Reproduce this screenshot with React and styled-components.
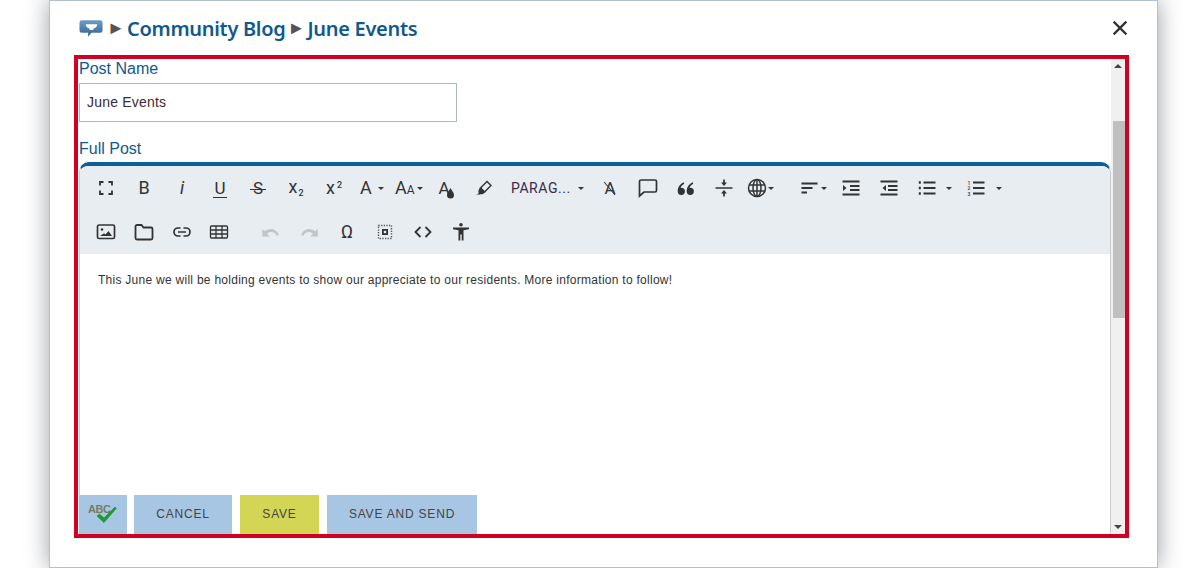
import React from 'react';
import styled, { createGlobalStyle } from 'styled-components';

const Global = createGlobalStyle`
  html, body { margin: 0; padding: 0; background: #fff; overflow: hidden; }
  body { font-family: "Liberation Sans", Arial, sans-serif; }
`;
const Page = styled.div`height: 568px; padding-left: 49px;`;
const Modal = styled.div`
  box-sizing: border-box; width: 1109px; height: 568px; background: #fff;
  border: 1px solid #b2c1cf; box-shadow: 0 0 22px rgba(30,40,50,.45);
  display: flex; flex-direction: column;
`;
const Header = styled.header`
  height: 54px; flex: none; display: flex; align-items: center; padding: 0 28px 0 29px;
`;
const Crumb = styled.h1`
  margin: 0; display: flex; align-items: center; flex: 1; gap: 5px;
  font: 600 20px "Noto Sans", "Open Sans", sans-serif; color: #11598c; letter-spacing: -.3px;
`;
const Sep = styled.span`
  font: 400 18px/1 "Liberation Sans", sans-serif; color: #555; width: 12px; display: flex;
  justify-content: center; letter-spacing: 0;
`;
const Close = styled.button`
  border: 0; background: none; padding: 0; margin-right: -1px; width: 20px; height: 20px;
  display: flex; align-items: center; justify-content: center;
`;
const Panel = styled.section`
  box-sizing: border-box; height: 483px; margin: 0 28px 0 24px; border: 4px solid #cf0022;
  display: flex; overflow: hidden;
`;
const Main = styled.div`flex: 1; min-width: 0; padding-left: 1px; display: flex; flex-direction: column;`;
const Label = styled.label`
  display: block; font-size: 16px; line-height: 19px; color: #11598c;
  margin-bottom: ${p => p.$gap}px;
`;
const NameInput = styled.div`
  box-sizing: border-box; width: 378px; height: 39px; border: 1px solid #a9b8c6;
  display: flex; align-items: center; padding: 0 0 2px 7px; font-size: 14px; color: #3b2a3a;
  margin-bottom: 17px; letter-spacing: .2px;
`;
const Editor = styled.div`
  flex: 1; min-height: 0; border-top: 4px solid #0f5e9a; border-radius: 10px 10px 0 0;
  display: flex; flex-direction: column; border-left: 1px solid #ccc; border-right: 1px solid #ccc;
`;
const Toolbar = styled.div`background: #e8edf1; height: 88px; padding-left: 7px; border-radius: 8px 8px 0 0; flex: none;`;
const ToolRow = styled.div`display: flex; height: 44px; align-items: center;`;
const Tool = styled.span`
  width: ${p => p.$w || 38}px; height: 44px; flex: none; display: flex; align-items: center;
  justify-content: ${p => p.$start ? 'flex-start' : 'center'};
  padding-left: ${p => p.$pl || 0}px; box-sizing: border-box; color: #333; position: relative;
`;
const ToolGap = styled.span`width: ${p => p.$w}px; flex: none;`;
const Caret = styled.i`
  width: 0; height: 0; flex: none; margin-left: ${p => p.$ml ?? 2}px;
  border-left: 3.5px solid transparent; border-right: 3.5px solid transparent; border-top: 3.5px solid #333;
`;
const Glyph = styled.span`
  font: ${p => p.$style || 'normal'} ${p => p.$w || 400} ${p => p.$s || 18}px/1 Roboto, "Liberation Sans", sans-serif;
  color: #333; position: relative; display: inline-block;
`;
const Under = styled(Glyph)`
  border-bottom: 1.5px solid #333; padding: 0 1px 1px; line-height: 15px; margin-top: 3px;
`;
const Strike = styled(Glyph)`
  &::after { content: ""; position: absolute; left: -3px; right: -3px; top: 9px; height: 1.5px; background: #333; }
`;
const Slash = styled(Glyph)`
  &::after { content: ""; position: absolute; left: -3px; right: -3px; top: 8px; height: 1.2px; background: #333; transform: rotate(50deg); }
`;
const Sub = styled.sub`font: 500 9px Roboto, sans-serif; vertical-align: -3px; margin-left: 1px;`;
const Sup = styled.sup`font: 500 9px Roboto, sans-serif; vertical-align: 6px; margin-left: 2px;`;
const Small = styled.span`font-size: 12px;`;
const ParaText = styled.span`font: 400 14px Roboto, "Liberation Sans", sans-serif; color: #3b2a4a; letter-spacing: .55px;`;
const EditBody = styled.div`flex: 1; padding: 18px 0 0 18px; font-size: 12px; line-height: 16px; color: #333; letter-spacing: .27px;`;
const Footer = styled.div`
  flex: none; height: 39px; display: flex; gap: 8px; border-right: 1px solid #ccc;
`;
const Btn = styled.button`
  border: 0; height: 39px; width: ${p => p.$w}px; background: ${p => p.$bg || '#a7c6e3'}; padding: 0 0 2px;
  font: 400 12px "Liberation Sans", sans-serif; letter-spacing: .8px; color: #444;
`;
const SpellBtn = styled(Btn)`
  margin-right: -1px; position: relative; display: flex; align-items: center; justify-content: center;
`;
const Abc = styled.span`
  position: absolute; left: 9px; top: 8px; font: 700 11px "Liberation Sans", sans-serif;
  color: #757c66; letter-spacing: -.5px;
`;
const Track = styled.div`
  width: 14px; flex: none; background: #f0f0f0; display: flex; flex-direction: column; align-items: flex-end;
`;
const ArrowBox = styled.div`height: 14px; width: 14px; flex: none; display: flex; align-items: center; justify-content: center;`;
const Thumb = styled.div`width: 12px; height: 197px; background: #c0c0c0; margin-top: 48px;`;
const TrackFill = styled.div`flex: 1;`;

const Ic = ({ children, s = 24, fill = 'none', stroke = '#333', sw = 1.6 }) => (
  <svg width={s} height={s} viewBox="0 0 24 24" fill={fill} stroke={stroke} strokeWidth={sw}>{children}</svg>
);

export default function App() {
  return (
    <Page>
      <Global />
      <Modal>
        <Header>
          <Crumb>
            <svg width="25" height="20" viewBox="0 0 26 20" style={{ marginRight: 1 }}>
              <defs>
                <linearGradient id="bub" x1="0" y1="0" x2="0" y2="1">
                  <stop offset="0" stopColor="#6f9cc6" />
                  <stop offset="1" stopColor="#2f6394" />
                </linearGradient>
              </defs>
              <path d="M3 2h19a2.500 2.500 0 0 1 2.500 2.500v8A2.500 2.500 0 0 1 22 15H13l-3.500 4V15H3A2.500 2.500 0 0 1 .5 12.500v-8A2.500 2.500 0 0 1 3 2z" fill="url(#bub)" />
              <path d="M7 6h12c0 2.500-2 4-4 4.500V12h-4v-1.500C9 10 7 8.500 7 6z" fill="#fff" />
            </svg>
            <Sep>►</Sep>
            Community Blog
            <Sep>►</Sep>
            June Events
          </Crumb>
          <Close aria-label="Close">
            <svg width="16" height="16" viewBox="0 0 16 16" stroke="#333" strokeWidth="2.400" strokeLinecap="square">
              <path d="M2.500 2.500l11 11M13.500 2.500l-11 11" />
            </svg>
          </Close>
        </Header>
        <Panel>
          <Main>
            <Label $gap={5}>Post Name</Label>
            <NameInput>June Events</NameInput>
            <Label $gap={4}>Full Post</Label>
            <Editor>
              <Toolbar>
                <ToolRow>
                  <Tool><Ic sw={1.800}><path d="M6 9.500V6h3.500M14.500 6H18v3.500M18 14.500V18h-3.500M9.500 18H6v-3.500" /></Ic></Tool>
                  <Tool><Glyph $s={18}>B</Glyph></Tool>
                  <Tool><Glyph $style="italic" $s={18}>i</Glyph></Tool>
                  <Tool><Under $s={17}>U</Under></Tool>
                  <Tool><Strike $s={17}>S</Strike></Tool>
                  <Tool><Glyph $s={18}>x<Sub>2</Sub></Glyph></Tool>
                  <Tool><Glyph $s={18}>x<Sup>2</Sup></Glyph></Tool>
                  <Tool $w={37} $start $pl={7}><Glyph $s={18}>A</Glyph><Caret $ml={6} /></Tool>
                  <Tool $w={38} $start $pl={5}><Glyph $s={18}>A<Small>A</Small></Glyph><Caret $ml={2} /></Tool>
                  <Tool $w={37}>
                    <Glyph $s={17}>A</Glyph>
                    <svg width="9" height="12" viewBox="0 0 9 12" style={{ marginLeft: -4, marginTop: 9 }}><path d="M4.500 1C6 4 8 5.500 8 8a3.500 3.500 0 0 1-7 0c0-2.500 2-4 3.500-7z" fill="#333" /></svg>
                  </Tool>
                  <Tool>
                    <Ic sw={1.400}>
                      <path d="M15 5.500l4 4-6.500 6.500-4-4z" />
                      <path d="M8.500 12l4 4-2 1.500H7.500L7 15z" fill="#333" />
                      <path d="M4 19l3-2 1 1.500H4z" fill="#333" stroke="none" />
                    </Ic>
                  </Tool>
                  <Tool $w={88} $start $pl={8}><ParaText>PARAG...</ParaText><Caret $ml={7} /></Tool>
                  <Tool><Slash $s={17}>A</Slash></Tool>
                  <Tool><Ic sw={1.7}><path d="M5 4h14a1.500 1.500 0 0 1 1.500 1.500v9A1.500 1.500 0 0 1 19 16H8l-4.500 4V5.500A1.500 1.500 0 0 1 5 4z" /></Ic></Tool>
                  <Tool>
                    <Ic fill="#333" stroke="none">
                      <g transform="translate(-2.300 -2.700) scale(1.200)">
                        <path d="M10 7.500C7 9 5 11.500 5 15a3 3 0 1 0 3-3l-.6.100C7.700 11 8.600 9.800 10.500 8.700z" />
                        <path d="M17.500 7.500C14.500 9 12.500 11.500 12.500 15a3 3 0 1 0 3-3l-.6.100c.3-1.100 1.200-2.300 3.100-3.400z" />
                      </g>
                    </Ic>
                  </Tool>
                  <Tool>
                    <Ic sw={1.7}>
                      <path d="M3.500 12h17M12 3.500v4M12 20.500v-4" />
                      <path d="M9 6.500h6L12 10zM9 17.500h6L12 14z" fill="#333" stroke="none" />
                    </Ic>
                  </Tool>
                  <Tool $w={44} $start $pl={2}>
                    <Ic sw={1.5}>
                      <circle cx="12" cy="12" r="8.500" />
                      <ellipse cx="12" cy="12" rx="4" ry="8.500" />
                      <path d="M12 3.500v17M4 9h16M4 15h16" />
                    </Ic>
                    <Caret $ml={-1} />
                  </Tool>
                  <Tool $w={45} $start $pl={12}>
                    <Ic sw={1.800}><path d="M2.500 7.500h16M2.500 12h11M2.500 16.500h5.500" /></Ic>
                    <Caret $ml={-2} />
                  </Tool>
                  <Tool>
                    <Ic sw={1.800}>
                      <path d="M3.500 5.500h17M11 10h9.500M11 14h9.500M3.500 18.500h17" />
                      <path d="M4 9l3.500 3L4 15z" fill="#333" stroke="none" />
                    </Ic>
                  </Tool>
                  <Tool>
                    <Ic sw={1.800}>
                      <path d="M3.500 5.500h17M11 10h9.500M11 14h9.500M3.500 18.500h17" />
                      <path d="M9 9l-3.500 3L9 15z" fill="#333" stroke="none" />
                    </Ic>
                  </Tool>
                  <Tool $w={50} $start $pl={7}>
                    <Ic sw={2}>
                      <path d="M8.500 6.500h12M8.500 12h12M8.500 17.500h12" />
                      <path d="M3.800 6.500h2M3.800 12h2M3.800 17.500h2" strokeWidth="2.600" />
                    </Ic>
                    <Caret $ml={7} />
                  </Tool>
                  <Tool $w={50} $start $pl={6}>
                    <Ic sw={2}>
                      <path d="M9 6.500h11.500M9 12h11.500M9 17.500h11.500" />
                      <text x="3.500" y="8.500" fontSize="5" fill="#333" stroke="none" fontFamily="Roboto" fontWeight="500">1</text>
                      <text x="3.500" y="14" fontSize="5" fill="#333" stroke="none" fontFamily="Roboto" fontWeight="500">2</text>
                      <text x="3.500" y="19.500" fontSize="5" fill="#333" stroke="none" fontFamily="Roboto" fontWeight="500">3</text>
                    </Ic>
                    <Caret $ml={8} />
                  </Tool>
                </ToolRow>
                <ToolRow>
                  <Tool>
                    <Ic sw={1.7}>
                      <rect x="3.500" y="5" width="17" height="13.500" rx="1.500" />
                      <circle cx="8" cy="9.500" r="1.300" fill="#333" stroke="none" />
                      <path d="M6 16h12l-3.500-5-3 3.500-1.500-1.300z" fill="#333" stroke="none" />
                    </Ic>
                  </Tool>
                  <Tool>
                    <Ic sw={1.8}><path d="M3.500 6.500A1.500 1.500 0 0 1 5 5h4.500l2 2.500H19a1.500 1.500 0 0 1 1.500 1.500v9A1.500 1.500 0 0 1 19 19.500H5A1.500 1.500 0 0 1 3.500 18z" /></Ic>
                  </Tool>
                  <Tool $w={37}>
                    <Ic sw={1.7}><path d="M10.500 8H8a4 4 0 0 0 0 8h2.500M13.500 8H16a4 4 0 0 1 0 8h-2.500M8 12h8" /></Ic>
                  </Tool>
                  <Tool>
                    <Ic sw={1.3}>
                      <rect x="3.500" y="6" width="17" height="12" rx="1" />
                      <path d="M3.500 10h17M3.500 14h17M9 6v12M15 6v12" />
                    </Ic>
                  </Tool>
                  <ToolGap $w={14} />
                  <Tool>
                    <Ic fill="#c2c6ca" stroke="none">
                      <g transform="translate(-3 -3) scale(1.250)">
                        <path d="M12 9.500c-2 0-3.700.7-5 1.900L5 9.500v6h6l-2.200-2.200c1-.9 2-1.300 3.200-1.300 2 0 3.800 1.300 4.500 3l1.800-.6C17.300 11.500 14.900 9.500 12 9.500z" />
                      </g>
                    </Ic>
                  </Tool>
                  <Tool>
                    <Ic fill="#c2c6ca" stroke="none">
                      <g transform="translate(-3 -3) scale(1.250)">
                        <path d="M12 9.500c2 0 3.700.7 5 1.900l2-1.900v6h-6l2.200-2.200c-1-.9-2-1.300-3.200-1.300-2 0-3.800 1.300-4.500 3l-1.800-.6C6.700 11.500 9.100 9.500 12 9.500z" />
                      </g>
                    </Ic>
                  </Tool>
                  <Tool><Glyph $s={18}>Ω</Glyph></Tool>
                  <Tool>
                    <Ic sw={1.400}>
                      <rect x="5.500" y="5.500" width="13" height="13" strokeDasharray="1.300 1.300" stroke="#555" />
                      <rect x="9" y="9" width="6" height="6" fill="#333" stroke="none" />
                      <rect x="10.800" y="10.800" width="2.400" height="2.400" fill="#e8edf1" stroke="none" />
                    </Ic>
                  </Tool>
                  <Tool><Ic sw={1.8}><path d="M9.500 7l-5 5 5 5M14.500 7l5 5-5 5" /></Ic></Tool>
                  <Tool>
                    <Ic fill="#333" stroke="none">
                      <circle cx="12" cy="4.700" r="1.800" />
                      <path d="M4 7.500h16v1.800l-5.500 1V20.500H12.700v-6h-1.400v6H9.500V10.300L4 9.300z" />
                    </Ic>
                  </Tool>
                </ToolRow>
              </Toolbar>
              <EditBody>This June we will be holding events to show our appreciate to our residents. More information to follow!</EditBody>
            </Editor>
            <Footer>
              <SpellBtn $w={48} aria-label="Spell check">
                <Abc>ABC</Abc>
                <svg width="40" height="24" viewBox="0 0 40 24" style={{ position: 'absolute', left: 4, top: 8 }}>
                  <path d="M14 13l2.500-2 4.500 4L32 4l1.200 1.500L21 19.500z" fill="#17a030" stroke="#0e7a22" strokeWidth=".5" />
                </svg>
              </SpellBtn>
              <Btn $w={98}>CANCEL</Btn>
              <Btn $w={79} $bg="#d3d654">SAVE</Btn>
              <Btn $w={150}>SAVE AND SEND</Btn>
            </Footer>
          </Main>
          <Track>
            <ArrowBox><svg width="8" height="4" viewBox="0 0 8 4"><path d="M4 0l4 4H0z" fill="#444" /></svg></ArrowBox>
            <Thumb />
            <TrackFill />
            <ArrowBox><svg width="8" height="4" viewBox="0 0 8 4"><path d="M0 0h8L4 4z" fill="#444" /></svg></ArrowBox>
          </Track>
        </Panel>
      </Modal>
    </Page>
  );
}
